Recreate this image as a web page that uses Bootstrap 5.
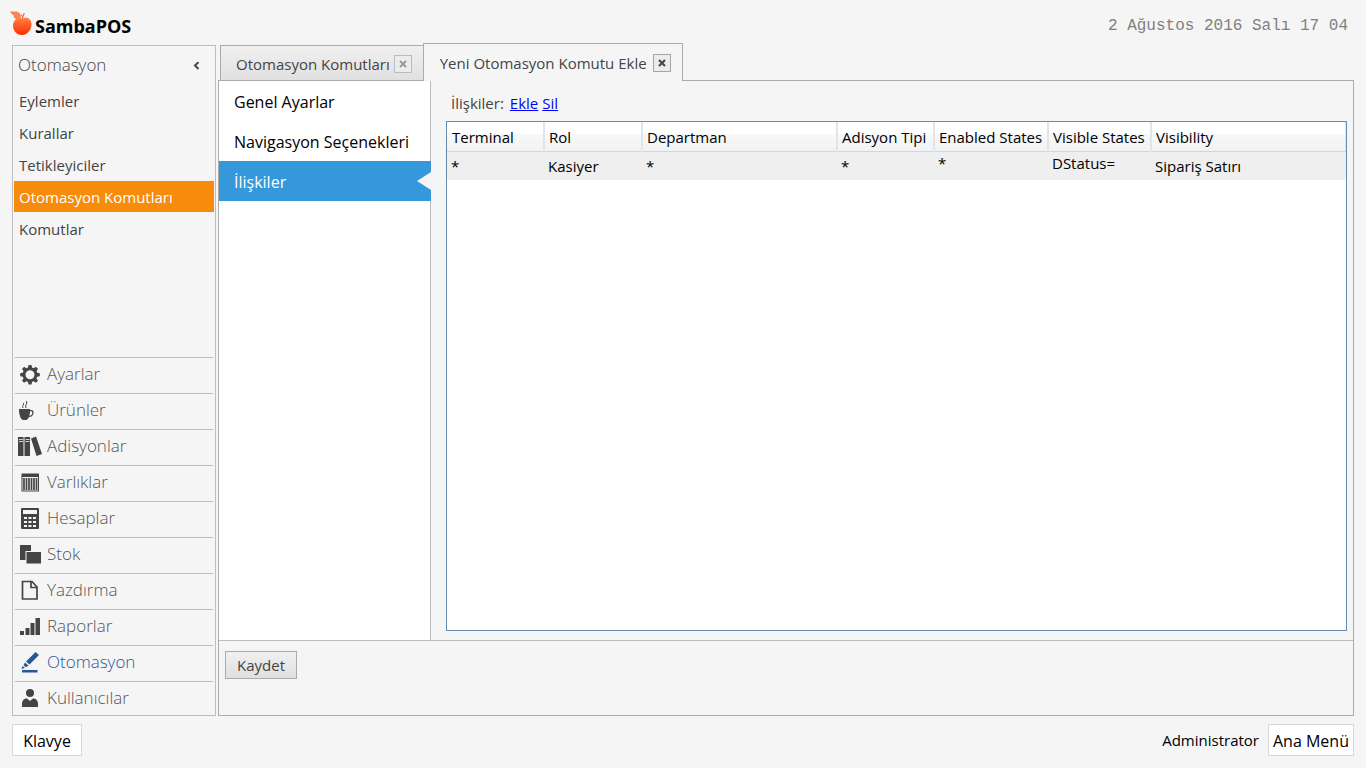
<!DOCTYPE html>
<html lang="tr">
<head>
<meta charset="utf-8">
<meta name="viewport" content="width=device-width, initial-scale=1">
<title>SambaPOS</title>
<link href="https://cdn.jsdelivr.net/npm/bootstrap@5.3.0/dist/css/bootstrap.min.css" rel="stylesheet">
<style>
:root { --page: #f5f5f5; --line: #ababab; --soft-line: #bcbcbc; --ink: #444; }
body { background: var(--page); color: var(--ink); font: 15px/20px "Open Sans", "Noto Sans", sans-serif; }
.shell { min-height: 100vh; padding: 0 12px 12px; }
.topbar { height: 45px; }
.brand { color: #000; font-size: 18px; font-weight: 700; margin-left: -2px; }
.brand svg { width: 22px; height: 26px; margin-right: 3px; }
.brand span { padding-top: 6px; }
.clock { font: 16px/20px "Liberation Mono", monospace; color: #808080; padding-right: 6px; padding-top: 6px; }
.sidebar { width: 204px; border: 1px solid var(--soft-line); padding: 0 1px; }
.side-title { font-size: 17px; font-weight: 300; height: 39px; padding: 0 10px 0 4px; margin: 0; }
.collapse-btn { border: 0; background: none; padding: 4px; line-height: 0; }
.side-link { display: block; height: 31px; line-height: 32px; margin-bottom: 1px; padding-left: 5px; color: var(--ink); text-decoration: none; }
.side-link.active { background: #f78b0b; color: #fff; }
.module-link { display: flex; align-items: center; height: 36px; border-top: 1px solid var(--soft-line); margin: 0 1px; color: #555; font-size: 17px; font-weight: 300; text-decoration: none; padding-bottom: 4px; }
.module-link:last-child { height: 34px; padding-bottom: 2px; }
.module-link svg { width: 28px; height: 24px; margin: 0 3px 0 1px; fill: #444; flex: none; }
.module-link.active { color: #2b579a; }
.module-link.active svg { fill: #2b579a; }
.workspace { margin-left: 2px; }
.tab-strip { height: 38px; margin: -2px 0 -1px; padding-left: 2px; z-index: 1; }
.doc-tab { border: 1px solid var(--line); }
.doc-tab a { color: var(--ink); text-decoration: none; }
.doc-tab-back { height: 36px; background: linear-gradient(#f0f0f0, #e0e0e0); border-right: 0; padding: 2px 11px 0 15px; gap: 4px; }
.doc-tab-front { height: 38px; background: var(--page); border-bottom: 0; padding: 0 11px 0 16px; gap: 6px; }
.tab-close { width: 18px; height: 18px; padding: 0; border: 1px solid #a5a5a5; background: #ececec; line-height: 0; display: grid; place-items: center; color: #444; }
.tab-close svg { width: 8px; height: 8px; stroke: currentColor; stroke-width: 2; }
.doc-tab-back .tab-close { border-color: #bcbcbc; color: #999; }
.panel { border: 1px solid var(--line); }
.page-nav { width: 212px; background: #fff; border-right: 1px solid var(--soft-line); }
.page-nav a { display: block; height: 40px; line-height: 42px; padding-left: 15px; font-size: 16px; color: #000; text-decoration: none; }
.page-nav a.active { background: #3498db; color: #fff; margin-right: -1px; position: relative; }
.page-nav a.active::after { content: ""; position: absolute; right: 0; top: 11px; border: solid transparent; border-width: 9px 14px 9px 0; border-right-color: var(--page); }
.editor { padding: 12px 6px 9px 15px; }
.editor-bar { padding-left: 5px; margin-bottom: 8px; gap: 4px; }
.editor-bar span { margin-right: 2px; }
.editor-bar a { color: #00f; }
.grid-box { background: #fff; border: 1px solid #688caf; }
.map-grid { width: 100%; table-layout: fixed; color: #000; }
.map-grid th { height: 29px; padding: 2px 0 0 5px; font-weight: 400; white-space: nowrap; background: linear-gradient(#fff 0 40%, #f7f8fa 40%, #f1f2f4); border-bottom: 1px solid #d5d5d5; border-right: 2px solid #e2e4e7; }
.map-grid th + th { padding-left: 4px; }
.map-grid th:last-child { border-right-width: 1px; }
.map-grid td { height: 29px; padding: 1px 0 0 4px; background: #efefef; white-space: nowrap; }
.map-grid td + td { padding-left: 4px; }
.map-grid td.raised { padding-top: 0; padding-bottom: 6px; }
.col-terminal { width: 97px; }
.col-role { width: 98px; }
.col-department { width: 195px; }
.col-ticket { width: 97px; }
.col-enabled { width: 114px; }
.col-visible { width: 103px; }
.save-bar { height: 75px; border-top: 1px solid var(--soft-line); padding: 10px 6px; }
.save-btn { height: 28px; width: 72px; border: 1px solid var(--line); background: linear-gradient(#f0f0f0, #e0e0e0); color: var(--ink); padding: 0; }
.flat-btn { height: 32px; border: 1px solid #d8d8d8; background: #fff; color: #000; font-size: 16px; padding: 2px 0 0; width: 70px; }
.flat-btn-wide { width: 86px; }
.user-name { color: #000; margin-right: 9px; }
</style>
</head>
<body>
<div class="shell d-flex flex-column">
  <header class="topbar d-flex justify-content-between align-items-center">
    <div class="brand d-flex align-items-center">
      <svg viewBox="0 0 22 26" aria-hidden="true"><defs><linearGradient id="fruit" x1="0" y1="0" x2="0" y2="1"><stop offset="0" stop-color="#ff8044"/><stop offset="1" stop-color="#ff2d00"/></linearGradient></defs><path d="M0 1.500C4 2 8 0 10.500 4.500L11 9C6 10 3 8 3.500 5 2 5 1 3 0 1.500z" fill="#fb8550"/><path d="M11.500 9 12 6.500 10.500 5l1-.5 1.300 1.300L13.500 3l1.500.5-1.500 3-.5 2.500z" fill="#f76a3a"/><path d="M12 9C17 6 21.500 9 21.500 14.500 21.500 20 17 25 12 25 6.500 25 2.500 20 3 15 3.500 10 7 7.500 12 9z" fill="url(#fruit)"/></svg>
      <span>SambaPOS</span>
    </div>
    <time class="clock" datetime="2016-08-02T17:04">2 Ağustos 2016 Salı 17 04</time>
  </header>

  <div class="d-flex flex-grow-1">
    <aside class="sidebar d-flex flex-column flex-shrink-0">
      <h1 class="side-title d-flex justify-content-between align-items-center">Otomasyon
        <button class="collapse-btn" type="button" aria-label="Daralt"><svg width="8" height="8" viewBox="0 0 8 8" fill="none" stroke="#444" stroke-width="2"><path d="M6.500 0 3 3.500 6.500 7"/></svg></button>
      </h1>
      <nav>
        <a class="side-link" href="#">Eylemler</a>
        <a class="side-link" href="#">Kurallar</a>
        <a class="side-link" href="#">Tetikleyiciler</a>
        <a class="side-link active" href="#">Otomasyon Komutları</a>
        <a class="side-link" href="#">Komutlar</a>
      </nav>
      <nav class="mt-auto">
        <a class="module-link" href="#"><svg viewBox="0 0 28 24"><path fill-rule="evenodd" d="M12.500 3h3l.5 2.600 1.700.7 2.200-1.500 2.100 2.100-1.500 2.200.7 1.700 2.600.5v3l-2.600.5-.7 1.700 1.500 2.200-2.100 2.100-2.200-1.500-1.700.7-.5 2.500h-3l-.5-2.500-1.700-.7-2.200 1.500L6 18.700l1.500-2.200-.7-1.700-2.600-.5v-3l2.600-.5.7-1.700L6 6.900l2.100-2.100 2.200 1.500 1.700-.7zM14 8.300a4.500 4.500 0 1 0 0 9 4.500 4.500 0 0 0 0-9z"/></svg>Ayarlar</a>
        <a class="module-link" href="#"><svg viewBox="0 0 28 24"><path fill-rule="evenodd" d="M3 11h11v1c3-.5 4 1 3.500 3.500-.5 2.500-2.500 3.500-4.500 3.500-1 2-2 3-3 3H7c-2.500-1-4-5-4-11zm11 2.200c0 1.500-.2 3-.7 4.500 2-.2 3-1.200 3-2.700 0-1.500-.8-2-2.300-1.800z"/><path d="M7 10c-1.500-2.500 1.500-3 .5-5M10 10c-1.500-3 2-4 .5-7" fill="none" stroke="#444"/></svg>Ürünler</a>
        <a class="module-link" href="#"><svg viewBox="0 0 28 24"><path d="M2 3h5.500v19H2zM8.500 3H14v19H8.500zM15 4.500l5-2L26 20l-5.500 2z"/><path d="M3 5.500h4M3 7.500h4M9.500 5.500h4M9.500 7.500h4" stroke="#f5f5f5" fill="none" stroke-width=".8"/></svg>Adisyonlar</a>
        <a class="module-link" href="#"><svg viewBox="0 0 28 24"><path fill-rule="evenodd" d="M5.500 3.500H23v18H5.500zM6.500 7v13.500H22V7z"/><path d="M8 8v12M10.500 8v12M13 8v12M15.500 8v12M18 8v12M20.500 8v12" stroke="#444" stroke-width="1.700"/></svg>Varlıklar</a>
        <a class="module-link" href="#"><svg viewBox="0 0 28 24"><path fill-rule="evenodd" d="M6 2h16q1 0 1 1v19q0 1-1 1H6q-1 0-1-1V3q0-1 1-1zM7 4v4h14V4z"/><path d="M8 12h3M12.500 12h3M17 12h3M8 16h3M12.500 16h3M17 16h3M8 20h3M12.500 20h3M17 20h3" stroke="#f5f5f5" stroke-width="2.200"/></svg>Hesaplar</a>
        <a class="module-link" href="#"><svg viewBox="0 0 28 24"><path d="M4 3h11v6H9.500v9H4zM10.500 10H25v11.500H10.500z"/></svg>Stok</a>
        <a class="module-link" href="#"><svg viewBox="0 0 28 24"><path d="M6.500 3.500h9.500L21 9v12H6.500zM15 3.500V9.500H21" fill="none" stroke="#444" stroke-width="1.700"/></svg>Yazdırma</a>
        <a class="module-link" href="#"><svg viewBox="0 0 28 24"><path d="M4 17h4v4H4zM9.500 14h4v7h-4zM14.500 9h4v12h-4zM19.500 4H24v17h-4.500z"/></svg>Raporlar</a>
        <a class="module-link active" href="#"><svg viewBox="0 0 28 24"><path d="M19.500 2 23 5 13.500 14.500 10 11.500zM9 12.500l3.500 3-2.500 1.800-2.500-2zM6.500 16l2.500 2-3.500 1zM6 20h15.500v2.500H6z"/></svg>Otomasyon</a>
        <a class="module-link" href="#"><svg viewBox="0 0 28 24"><circle cx="14" cy="7" r="4"/><path d="M6 21v-3c0-3.500 2-5.500 5-5.500l3 2.500 3-2.500c3 0 5 2 5 5.500v3z"/></svg>Kullanıcılar</a>
      </nav>
    </aside>

    <main class="workspace d-flex flex-column flex-grow-1">
      <div class="tab-strip d-flex align-items-end">
        <div class="doc-tab doc-tab-back d-flex align-items-center"><a href="#">Otomasyon Komutları</a><button class="tab-close" type="button" aria-label="Kapat"><svg viewBox="0 0 8 8"><path d="M1 1l6 6M7 1 1 7"/></svg></button></div>
        <div class="doc-tab doc-tab-front d-flex align-items-center"><a href="#">Yeni Otomasyon Komutu Ekle</a><button class="tab-close" type="button" aria-label="Kapat"><svg viewBox="0 0 8 8"><path d="M1 1l6 6M7 1 1 7"/></svg></button></div>
      </div>
      <section class="panel d-flex flex-column flex-grow-1">
        <div class="d-flex flex-grow-1">
          <nav class="page-nav flex-shrink-0">
            <a href="#">Genel Ayarlar</a>
            <a href="#">Navigasyon Seçenekleri</a>
            <a class="active" href="#">İlişkiler</a>
          </nav>
          <div class="editor d-flex flex-column flex-grow-1">
            <div class="editor-bar d-flex"><span>İlişkiler:</span><a href="#">Ekle</a><a href="#">Sil</a></div>
            <div class="grid-box flex-grow-1">
              <table class="map-grid">
                <colgroup><col class="col-terminal"><col class="col-role"><col class="col-department"><col class="col-ticket"><col class="col-enabled"><col class="col-visible"><col></colgroup>
                <thead><tr><th>Terminal</th><th>Rol</th><th>Departman</th><th>Adisyon Tipi</th><th>Enabled States</th><th>Visible States</th><th>Visibility</th></tr></thead>
                <tbody><tr><td>*</td><td>Kasiyer</td><td>*</td><td>*</td><td class="raised">*</td><td class="raised">DStatus=</td><td>Sipariş Satırı</td></tr></tbody>
              </table>
            </div>
          </div>
        </div>
        <div class="save-bar"><button class="save-btn" type="button">Kaydet</button></div>
      </section>
    </main>
  </div>

  <footer class="d-flex justify-content-between mt-2">
    <button class="flat-btn" type="button">Klavye</button>
    <div class="d-flex align-items-center"><span class="user-name">Administrator</span><button class="flat-btn flat-btn-wide" type="button">Ana Menü</button></div>
  </footer>
</div>
<script src="https://cdn.jsdelivr.net/npm/bootstrap@5.3.0/dist/js/bootstrap.bundle.min.js"></script>
</body>
</html>
